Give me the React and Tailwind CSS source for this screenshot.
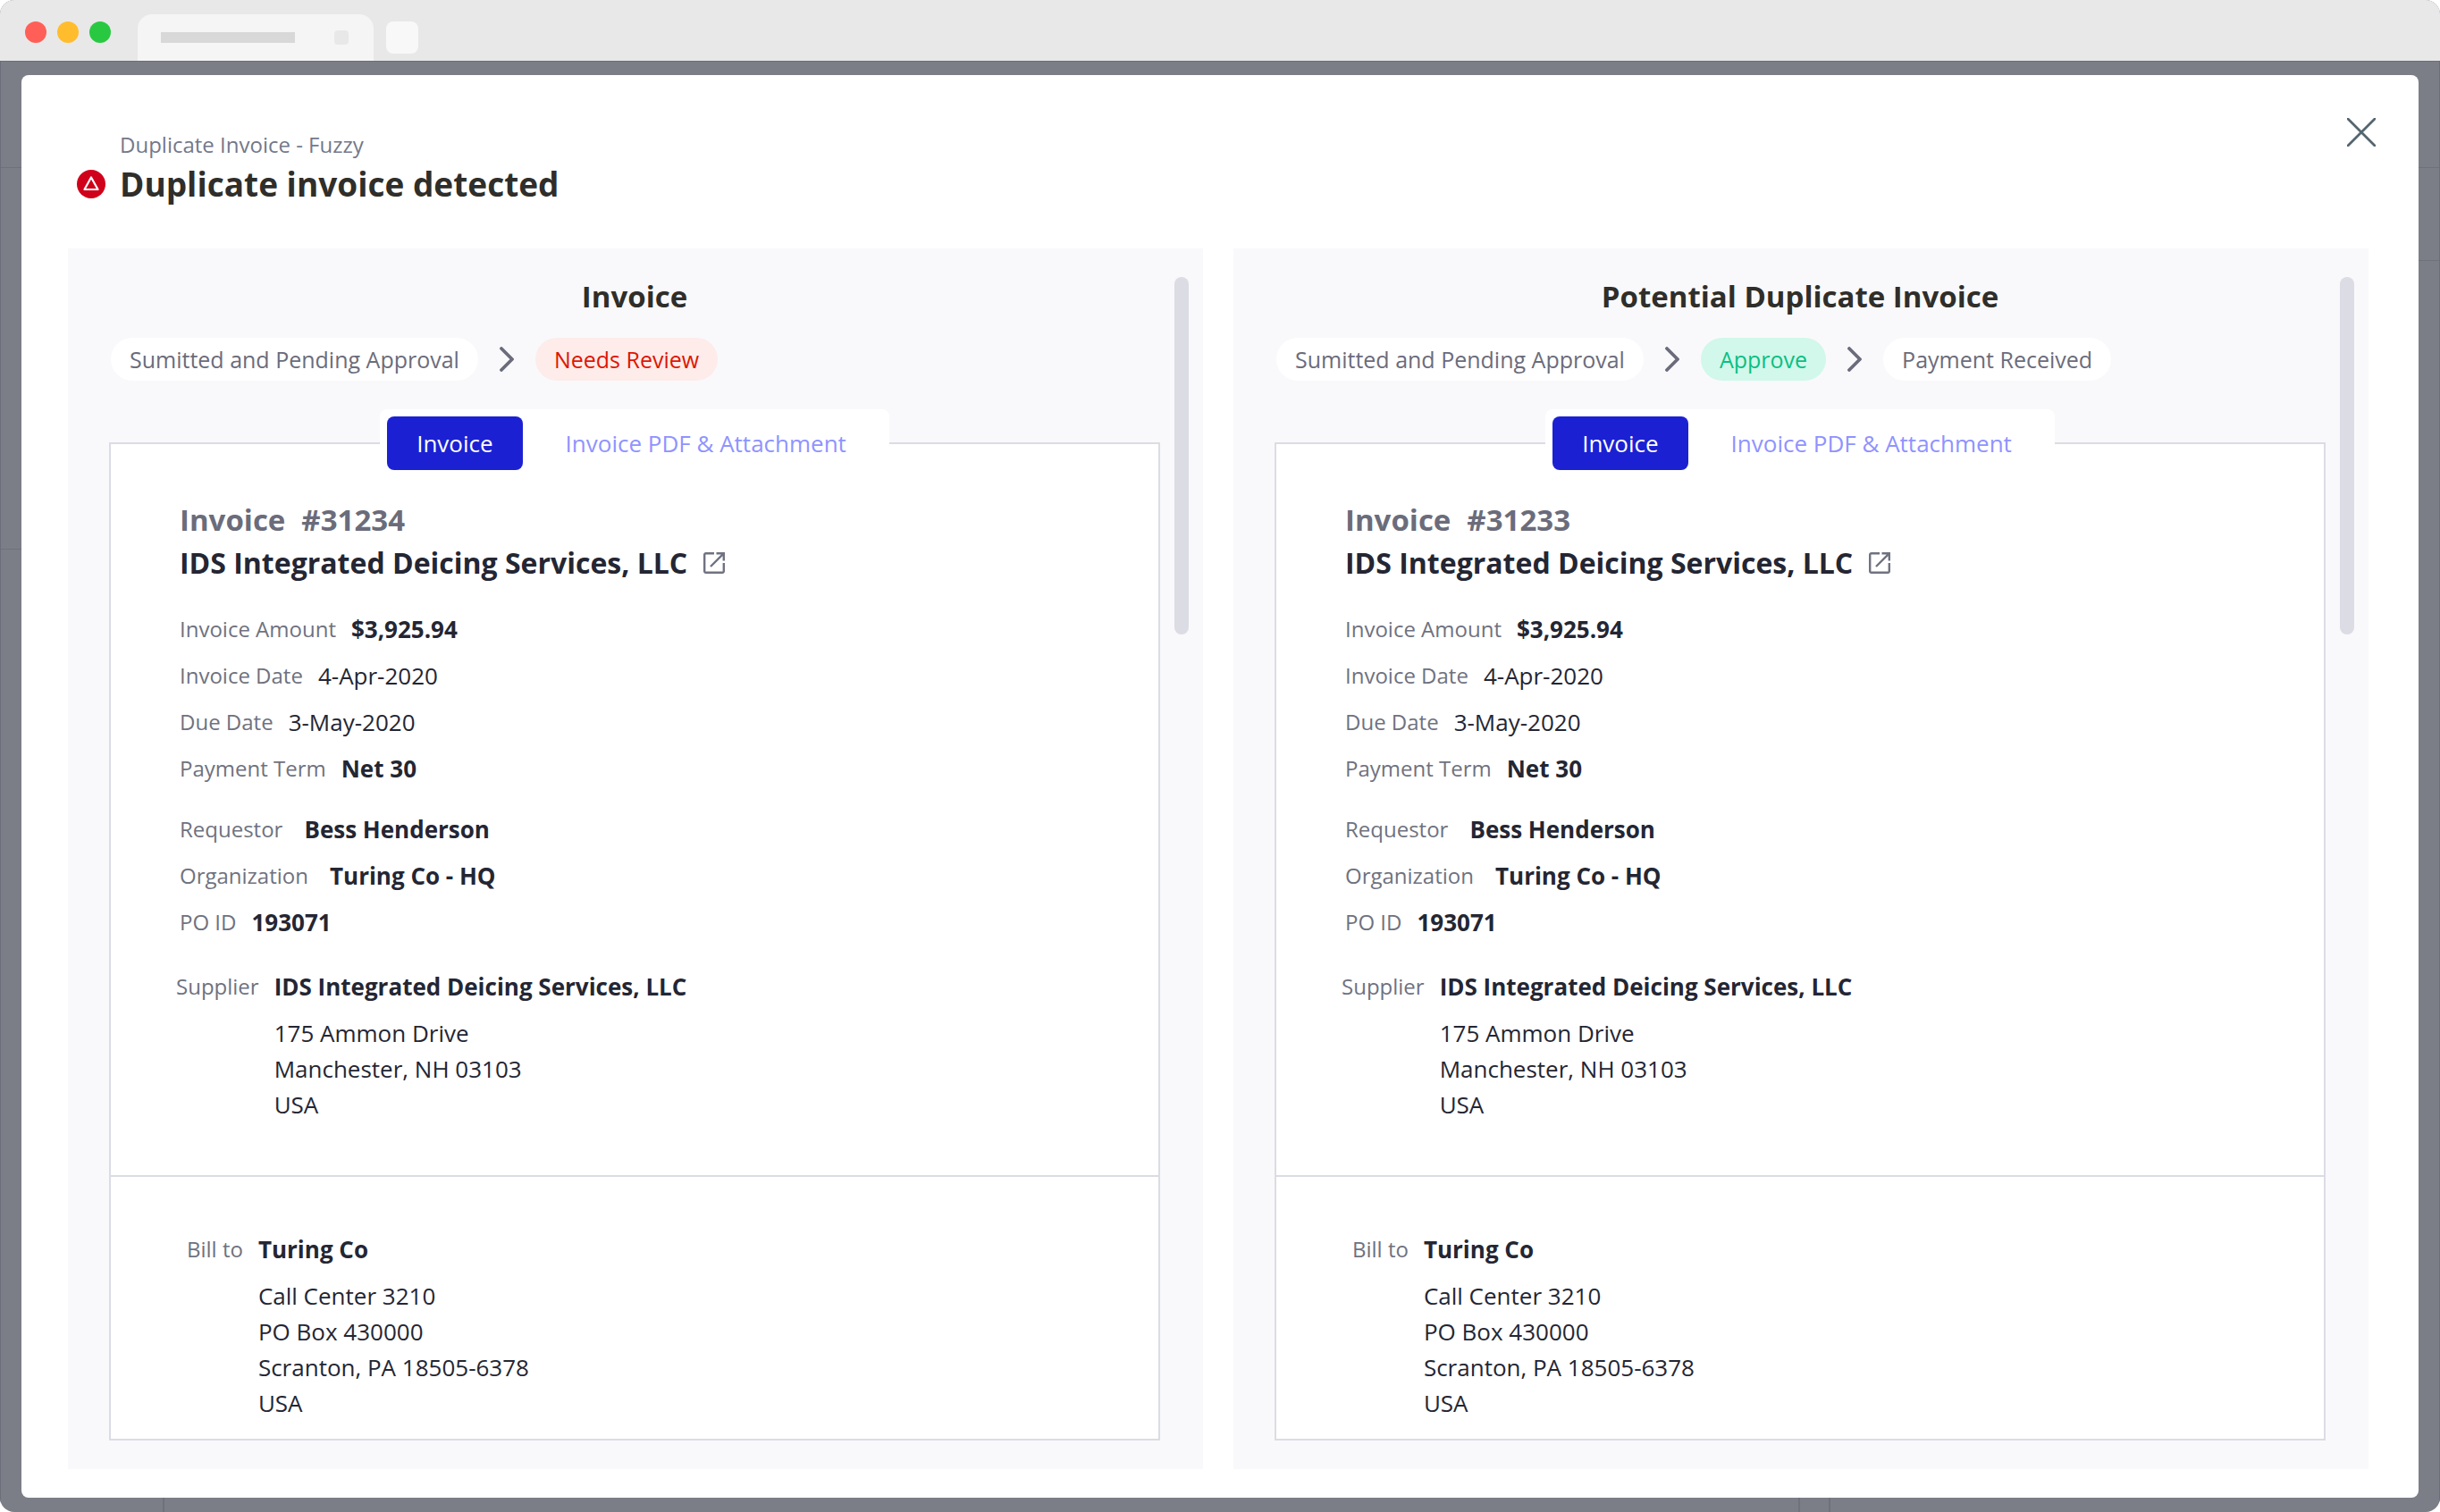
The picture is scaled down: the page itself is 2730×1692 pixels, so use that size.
import { useState } from 'react'

const invoices = [
  {
    title: 'Invoice',
    number: '#31234',
    steps: [
      { label: 'Sumitted and Pending Approval', tone: 'neutral' },
      { label: 'Needs Review', tone: 'danger' },
    ],
  },
  {
    title: 'Potential Duplicate Invoice',
    number: '#31233',
    steps: [
      { label: 'Sumitted and Pending Approval', tone: 'neutral' },
      { label: 'Approve', tone: 'success' },
      { label: 'Payment Received', tone: 'neutral' },
    ],
  },
]

const supplier = 'IDS Integrated Deicing Services, LLC'

const tones = {
  neutral: 'bg-white text-[#6b6c7b]',
  danger: 'bg-[#fdecea] text-[#de1600]',
  success: 'bg-[#d1f8ea] text-[#0abf83]',
}

function AlertIcon() {
  return (
    <svg className="size-8 shrink-0" viewBox="0 0 32 32" fill="none" aria-hidden="true">
      <circle cx="16" cy="16" r="16" fill="#d0021b" />
      <path d="M16 8.5 L23.5 22 H8.5 Z" stroke="#fff" strokeWidth="2.2" strokeLinejoin="round" />
    </svg>
  )
}

function Chevron() {
  return (
    <svg className="h-7 w-4 shrink-0" viewBox="0 0 16 28" fill="none" aria-hidden="true">
      <path d="M2 2 L14 14 L2 26" stroke="#6b6c7b" strokeWidth="3.8" strokeLinecap="round" strokeLinejoin="round" />
    </svg>
  )
}

function OpenIcon() {
  return (
    <svg className="size-6" viewBox="0 0 24 24" fill="none" stroke="#6f7280" strokeWidth="2.4" aria-hidden="true">
      <path d="M12 1.2 H2.8 A1.6 1.6 0 0 0 1.2 2.8 V21.2 A1.6 1.6 0 0 0 2.8 22.8 H21.2 A1.6 1.6 0 0 0 22.8 21.2 V12" />
      <path d="M14.5 1.2 H22.8 V9.5 M22.4 1.6 L8 16" />
    </svg>
  )
}

function Field({ label, value, strong, wide }) {
  return (
    <div className={`flex h-[52px] items-center ${wide ? 'gap-6' : 'gap-[17px]'}`}>
      <dt className="text-2xl text-[#6f7280]">{label}</dt>
      <dd className={`text-[26px] leading-10 ${strong ? 'font-bold' : ''}`}>{value}</dd>
    </div>
  )
}

function Address({ label, name, lines }) {
  return (
    <div className="flex gap-[17px]">
      <div className="flex h-[52px] items-center text-2xl text-[#6f7280]">{label}</div>
      <div className="text-[26px] leading-10">
        <div className="mb-1.5 flex h-[52px] items-center font-bold">{name}</div>
        {lines.map(line => <div key={line}>{line}</div>)}
      </div>
    </div>
  )
}

function InvoicePanel({ invoice }) {
  const [tab, setTab] = useState('invoice')
  const tabs = [
    { id: 'invoice', label: 'Invoice' },
    { id: 'pdf', label: 'Invoice PDF & Attachment' },
  ]

  return (
    <section className="relative flex min-w-0 flex-1 flex-col bg-[#f9f9fb] pt-8 pr-12 pb-8 pl-[46px]">
      <h2 className="text-center text-[33px] leading-[44px] font-bold text-[#2f2e2a]">{invoice.title}</h2>

      <ol className="mt-6 flex items-center gap-6 pl-0.5">
        {invoice.steps.map((step, i) => (
          <li key={step.label} className="flex items-center gap-6">
            {i > 0 && <Chevron />}
            <span className={`flex h-12 items-center rounded-full px-[21px] pt-0.5 text-[25px] whitespace-nowrap ${tones[step.tone]}`}>
              {step.label}
            </span>
          </li>
        ))}
      </ol>

      <div className="relative z-10 mx-auto mt-8 flex rounded-t-lg bg-white p-2" role="tablist">
        {tabs.map(t => (
          <button
            key={t.id}
            type="button"
            role="tab"
            aria-selected={tab === t.id}
            onClick={() => setTab(t.id)}
            className={`h-[60px] rounded-lg text-[26px] ${tab === t.id ? 'bg-[#1b21d3] px-[33px] text-white' : 'pr-10 pl-12 text-[#8f93ff]'}`}
          >
            {t.label}
          </button>
        ))}
      </div>

      <div className="-mt-[39px] flex-1 border-2 border-[#dbdce4] bg-white text-[#242633]">
        <div className="h-[820px] border-b-2 border-[#dbdce4] px-[77px] pt-[61px]">
          <p className="flex gap-[18px] text-[33px] leading-[48px] font-bold text-[#6b6c7b]">
            <span>Invoice</span>
            <span>{invoice.number}</span>
          </p>
          <h3 className="flex items-center gap-[18px] text-[32px] leading-[48px] font-bold">
            {supplier}
            <a href="#supplier" aria-label="Open supplier"><OpenIcon /></a>
          </h3>

          <dl className="mt-6">
            <Field label="Invoice Amount" value="$3,925.94" strong />
            <Field label="Invoice Date" value="4-Apr-2020" />
            <Field label="Due Date" value="3-May-2020" />
            <Field label="Payment Term" value="Net 30" strong />
          </dl>
          <dl className="mt-4">
            <Field label="Requestor" value="Bess Henderson" strong wide />
            <Field label="Organization" value="Turing Co - HQ" strong wide />
            <Field label="PO ID" value="193071" strong />
          </dl>
          <div className="mt-5 -ml-1">
            <Address label="Supplier" name={supplier} lines={['175 Ammon Drive', 'Manchester, NH 03103', 'USA']} />
          </div>
        </div>
        <div className="px-[85px] pt-[55px]">
          <Address label="Bill to" name="Turing Co" lines={['Call Center 3210', 'PO Box 430000', 'Scranton, PA 18505-6378', 'USA']} />
        </div>
      </div>

      <div className="absolute top-8 right-4 h-[400px] w-4 rounded-full bg-[#dbdce4]" />
    </section>
  )
}

function BrowserBar() {
  return (
    <div className="flex h-[68px] items-end bg-[#e8e8e8] pl-7">
      <div className="flex gap-3 self-start pt-6">
        <span className="size-6 rounded-full bg-[#ff5f57]" />
        <span className="size-6 rounded-full bg-[#ffbd2e]" />
        <span className="size-6 rounded-full bg-[#28c941]" />
      </div>
      <div className="ml-[30px] flex h-[52px] w-[264px] items-center justify-between rounded-t-2xl bg-[#f5f5f5] pr-7 pl-[26px]">
        <span className="h-3 w-[150px] bg-[#d8d8d8]" />
        <span className="size-4 rounded-sm bg-[#e8e8e8]" />
      </div>
      <span className="mb-2 ml-[14px] size-9 rounded-lg bg-[#f8f8f8]" />
    </div>
  )
}

export default function App() {
  return (
    <div className="flex min-h-screen flex-col overflow-hidden rounded-2xl bg-[#7b7e86] font-['Open_Sans',sans-serif]">
      <BrowserBar />
      <div className="relative flex flex-1 border border-b-0 border-[#6c6e79] px-[23px] pt-[15px] pb-4">
        {/* edges of the dimmed page behind the dialog */}
        <div className="absolute inset-x-0 top-[118px] h-px bg-[#6f717b]" />
        <div className="absolute top-[222px] right-0 h-px w-6 bg-[#6f717b]" />
        <div className="absolute top-[545px] left-0 h-px w-6 bg-[#6f717b]" />
        <div className="absolute bottom-0 left-[181px] h-4 w-0.5 bg-[#6f717b]" />
        <div className="absolute right-[715px] bottom-0 h-4 w-0.5 bg-[#6f717b]" />
        <div className="absolute right-[681px] bottom-0 h-4 w-0.5 bg-[#6f717b]" />

        <div role="dialog" aria-labelledby="dialog-title" className="relative flex flex-1 flex-col rounded-lg bg-white pr-14 pb-8 pl-[52px]">
          <header className="flex h-[194px] items-start justify-between pt-12">
            <div className="pt-3.5 pl-[10px]">
              <p className="pl-12 text-2xl text-[#74788a]">Duplicate Invoice - Fuzzy</p>
              <div className="mt-px flex items-center gap-4">
                <AlertIcon />
                <h1 id="dialog-title" className="text-[37px] leading-[54px] font-bold text-[#2f2e2a]">
                  Duplicate invoice detected
                </h1>
              </div>
            </div>
            <button type="button" aria-label="Close" className="-mr-2">
              <svg className="size-8" viewBox="0 0 32 32" fill="none" aria-hidden="true">
                <path d="M1 1 L31 31 M31 1 L1 31" stroke="#546570" strokeWidth="2.8" strokeLinecap="round" />
              </svg>
            </button>
          </header>
          <div className="flex flex-1 gap-[34px]">
            {invoices.map(inv => <InvoicePanel key={inv.number} invoice={inv} />)}
          </div>
        </div>
      </div>
    </div>
  )
}
